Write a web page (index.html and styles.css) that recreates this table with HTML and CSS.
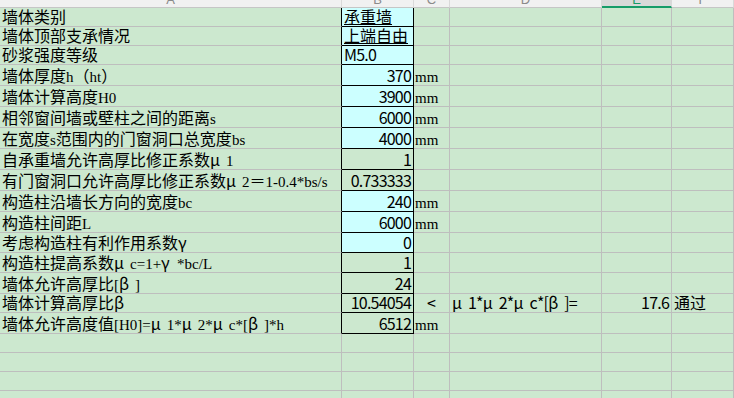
FILE: index.html
```html
<!DOCTYPE html>
<html lang="zh-CN">
<head>
<meta charset="utf-8">
<title>墙体高厚比验算</title>
<link rel="stylesheet" href="styles.css">
</head>
<body>
<div class="sheet">
  <div class="row hdr">
    <div class="c h">A</div>
    <div class="c h">B</div>
    <div class="c h">C</div>
    <div class="c h">D</div>
    <div class="c h sel">E</div>
    <div class="c h">F</div>
  </div>

  <div class="row r19">
    <div class="c a">墙体类别</div>
    <div class="c b in"><span class="u">承重墙</span></div>
    <div class="c"></div><div class="c"></div><div class="c"></div><div class="c"></div>
  </div>
  <div class="row r19">
    <div class="c a">墙体顶部支承情况</div>
    <div class="c b in"><span class="u">上端自由</span></div>
    <div class="c"></div><div class="c"></div><div class="c"></div><div class="c"></div>
  </div>
  <div class="row r19">
    <div class="c a">砂浆强度等级</div>
    <div class="c b in"><span class="n">M5.0</span></div>
    <div class="c"></div><div class="c"></div><div class="c"></div><div class="c"></div>
  </div>
  <div class="row r21">
    <div class="c a">墙体厚度<span class="t">h</span>（<span class="t">ht</span>）</div>
    <div class="c b in num"><span class="n">370</span></div>
    <div class="c unit"><span class="t">mm</span></div><div class="c"></div><div class="c"></div><div class="c"></div>
  </div>
  <div class="row r21">
    <div class="c a">墙体计算高度<span class="t">H0</span></div>
    <div class="c b in num"><span class="n">3900</span></div>
    <div class="c unit"><span class="t">mm</span></div><div class="c"></div><div class="c"></div><div class="c"></div>
  </div>
  <div class="row r21">
    <div class="c a">相邻窗间墙或壁柱之间的距离<span class="t">s</span></div>
    <div class="c b in num"><span class="n">6000</span></div>
    <div class="c unit"><span class="t">mm</span></div><div class="c"></div><div class="c"></div><div class="c"></div>
  </div>
  <div class="row r21">
    <div class="c a">在宽度<span class="t">s</span>范围内的门窗洞口总宽度<span class="t">bs</span></div>
    <div class="c b in num"><span class="n">4000</span></div>
    <div class="c unit"><span class="t">mm</span></div><div class="c"></div><div class="c"></div><div class="c"></div>
  </div>
  <div class="row r21">
    <div class="c a">自承重墙允许高厚比修正系数<span class="g">μ</span><span class="t">1</span></div>
    <div class="c b num"><span class="n">1</span></div>
    <div class="c"></div><div class="c"></div><div class="c"></div><div class="c"></div>
  </div>
  <div class="row r21">
    <div class="c a">有门窗洞口允许高厚比修正系数<span class="g">μ</span><span class="t">2</span>＝<span class="t">1-0.4*bs/s</span></div>
    <div class="c b num"><span class="n">0.733333</span></div>
    <div class="c"></div><div class="c"></div><div class="c"></div><div class="c"></div>
  </div>
  <div class="row r21">
    <div class="c a">构造柱沿墙长方向的宽度<span class="t">bc</span></div>
    <div class="c b in num"><span class="n">240</span></div>
    <div class="c unit"><span class="t">mm</span></div><div class="c"></div><div class="c"></div><div class="c"></div>
  </div>
  <div class="row r21">
    <div class="c a">构造柱间距<span class="t">L</span></div>
    <div class="c b in num"><span class="n">6000</span></div>
    <div class="c unit"><span class="t">mm</span></div><div class="c"></div><div class="c"></div><div class="c"></div>
  </div>
  <div class="row r20">
    <div class="c a">考虑构造柱有利作用系数<span class="g">γ</span></div>
    <div class="c b in num"><span class="n">0</span></div>
    <div class="c"></div><div class="c"></div><div class="c"></div><div class="c"></div>
  </div>
  <div class="row r20">
    <div class="c a">构造柱提高系数<span class="g">μ</span><span class="t">c=1+</span><span class="g">γ</span><span class="t">*bc/L</span></div>
    <div class="c b num"><span class="n">1</span></div>
    <div class="c"></div><div class="c"></div><div class="c"></div><div class="c"></div>
  </div>
  <div class="row r21">
    <div class="c a">墙体允许高厚比<span class="t">[</span><span class="g">β</span><span class="t">]</span></div>
    <div class="c b num"><span class="n">24</span></div>
    <div class="c"></div><div class="c"></div><div class="c"></div><div class="c"></div>
  </div>
  <div class="row r19">
    <div class="c a">墙体计算高厚比<span class="g">β</span></div>
    <div class="c b num"><span class="n">10.54054</span></div>
    <div class="c mid">&lt;</div>
    <div class="c"><span class="g">μ</span><span class="n">1*</span><span class="g">μ</span><span class="n">2*</span><span class="g">μ</span><span class="n">c*[</span><span class="g">β</span><span class="n">]=</span></div>
    <div class="c num"><span class="n">17.6</span></div>
    <div class="c">通过</div>
  </div>
  <div class="row r21">
    <div class="c a">墙体允许高度值<span class="t">[H0]=</span><span class="g">μ</span><span class="t">1*</span><span class="g">μ</span><span class="t">2*</span><span class="g">μ</span><span class="t">c*[</span><span class="g">β</span><span class="t">]*h</span></div>
    <div class="c b num"><span class="n">6512</span></div>
    <div class="c unit"><span class="t">mm</span></div><div class="c"></div><div class="c"></div><div class="c"></div>
  </div>

  <div class="row r19"><div class="c"></div><div class="c"></div><div class="c"></div><div class="c"></div><div class="c"></div><div class="c"></div></div>
  <div class="row r19"><div class="c"></div><div class="c"></div><div class="c"></div><div class="c"></div><div class="c"></div><div class="c"></div></div>
  <div class="row r19"><div class="c"></div><div class="c"></div><div class="c"></div><div class="c"></div><div class="c"></div><div class="c"></div></div>
  <div class="row r19"><div class="c"></div><div class="c"></div><div class="c"></div><div class="c"></div><div class="c"></div><div class="c"></div></div>
</div>
</body>
</html>
```

FILE: styles.css
```css
html, body {
  margin: 0;
  padding: 0;
}

body {
  width: 734px;
  height: 398px;
  overflow: hidden;
  background: #cce8cf;
  color: #000;
  font-family: "Noto Sans CJK SC", sans-serif;
  font-size: 16px;
}

.sheet {
  display: flex;
  flex-direction: column;
}

.row {
  display: grid;
  grid-template-columns: 342px 72px 36px 152px 70px 1fr;
  flex: none;
}

.r19 { height: 19px; }
.r20 { height: 20px; }
.r21 { height: 21px; }

.c {
  box-sizing: border-box;
  border-right: 1px solid #bebebe;
  border-bottom: 1px solid #bebebe;
  white-space: nowrap;
  overflow: hidden;
  padding: 0 2px 1px 2px;
  line-height: 17px;
}

.r20 .c { padding-top: 1px; }
.r21 .c { padding-top: 2px; }

/* header */
.hdr {
  height: 8px;
  background: #f1f1f1;
}

.h {
  text-align: center;
  border-right-color: #d9d9d9;
  border-bottom-color: #c6c6c6;
  color: #8a8a8a;
  font-family: "Liberation Sans", sans-serif;
  font-size: 13px;
  line-height: 0;
  padding: 0;
}

.h.sel {
  background: #d9d9d9;
  border-bottom: 2px solid #179c69;
  color: #179c69;
}

/* column A next to the framed column B */
.a {
  border-right-color: #000;
}

/* framed column B */
.b {
  border-right-color: #000;
  border-bottom-color: #000;
}

.in {
  background: #ccffff;
}

.num {
  text-align: right;
}

.unit {
  padding-left: 1px;
}

.mid {
  text-align: center;
  padding-left: 0;
  padding-right: 0;
}

.u {
  text-decoration: underline;
  text-underline-offset: 1px;
}

/* latin runs in Times-like face */
.t {
  font-family: "Liberation Serif", serif;
  font-size: 15px;
  line-height: 0;
}

/* full-width greek letters */
.g {
  display: inline-block;
  width: 16px;
}

/* half-width digits */
.n {
  letter-spacing: -0.8px;
}
```
